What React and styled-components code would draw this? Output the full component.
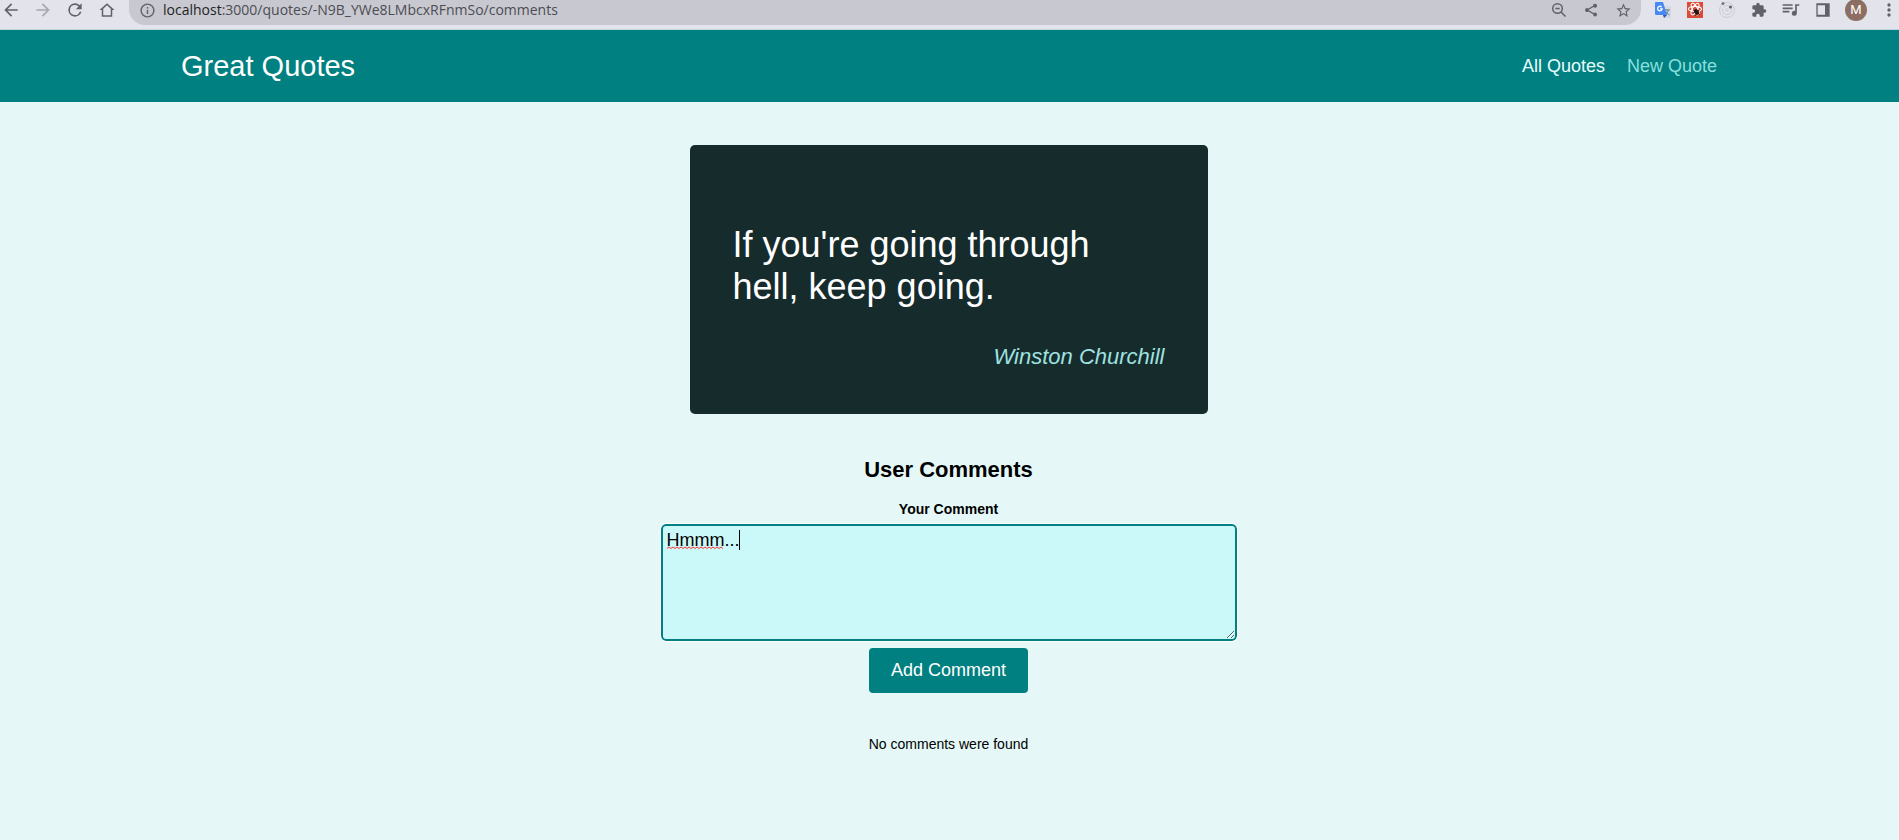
import React from 'react';
import styled, { createGlobalStyle } from 'styled-components';

const GlobalStyle = createGlobalStyle`
  * { box-sizing: border-box; }
  html { background: #e5f8f7; }
  body {
    margin: 0;
    background: #e5f8f7;
    color: #000;
    font-family: "Liberation Sans", Arial, sans-serif;
  }
`;

const Toolbar = styled.div`
  display: flex;
  align-items: flex-start;
  height: 30px;
  padding-left: 1px;
  background: #e3e3eb;
  border-bottom: 1px solid #c4d4dc;
  overflow: hidden;
`;

const NavButtons = styled.div`
  display: flex;
  gap: 12px;
  padding-right: 12px;
`;

const IconButton = styled.button`
  display: flex;
  align-items: center;
  justify-content: center;
  width: 20px;
  height: 20px;
  padding: 0;
  border: 0;
  background: none;
  color: #5f6368;
  opacity: ${(p) => (p.$dim ? 0.45 : 1)};

  svg {
    display: block;
    flex: none;
  }
`;

const AddressBar = styled.div`
  flex: 1;
  min-width: 0;
  display: flex;
  align-items: flex-start;
  height: 25px;
  padding: 0 8px;
  border-radius: 0 0 16px 16px;
  background: #c8c8d1;
`;

const UrlText = styled.div`
  flex: 1;
  min-width: 0;
  padding-left: 6px;
  font: 14px/20px "Open Sans", "Noto Sans", sans-serif;
  color: #4c4d52;
  white-space: nowrap;
`;

const Host = styled.span`
  color: #1f1f24;
`;

const PageActions = styled.div`
  display: flex;
  gap: 12px;
`;

const Extensions = styled.div`
  display: flex;
  gap: 12px;
  padding-left: 12px;
`;

const Avatar = styled.button`
  width: 22px;
  height: 22px;
  margin-top: -1px;
  padding: 0;
  border: 0;
  border-radius: 50%;
  background: #8d6e63;
  color: #fff;
  font: 13px/22px Roboto, sans-serif;
`;

const Header = styled.header`
  display: flex;
  align-items: center;
  justify-content: space-between;
  height: 72px;
  padding: 0 182px 0 181px;
  background: #008080;
`;

const Logo = styled.div`
  font-size: 29px;
  color: #fff;
`;

const NavList = styled.ul`
  display: flex;
  gap: 22px;
  margin: 0;
  padding: 0;
  list-style: none;
`;

const NavLink = styled.a`
  font-size: 18px;
  text-decoration: none;
  color: ${(p) => (p.$active ? '#e6fcfc' : '#88dfdf')};
`;

const Main = styled.main`
  display: flex;
  flex-direction: column;
  align-items: center;
  padding: 43px 18px 43px 16px;
`;

const Quote = styled.figure`
  display: flex;
  flex-direction: column;
  width: 100%;
  max-width: 518px;
  margin: 0;
  padding: 79px 43px 44px;
  border-radius: 5px;
  background: #162b2c;
`;

const QuoteText = styled.p`
  margin: 0 0 35px;
  font-size: 36px;
  line-height: 42px;
  color: #fff;
`;

const Author = styled.figcaption`
  align-self: flex-end;
  font-size: 22px;
  line-height: 27px;
  font-style: italic;
  color: #9fe2e0;
`;

const Comments = styled.section`
  display: flex;
  flex-direction: column;
  align-items: center;
  width: 100%;
  padding-top: 43px;
`;

const Title = styled.h2`
  margin: 0;
  font-size: 22px;
  line-height: 26px;
`;

const Form = styled.form`
  display: flex;
  flex-direction: column;
  align-items: center;
  width: 100%;
  max-width: 576px;
  padding-top: 18px;
`;

const Label = styled.label`
  margin-bottom: 7px;
  font-size: 14px;
  line-height: 16px;
  font-weight: bold;
`;

const Field = styled.div`
  position: relative;
  width: 100%;
`;

const TextArea = styled.textarea`
  display: block;
  width: 100%;
  height: 117px;
  padding: 4px;
  border: 2px solid #008080;
  border-radius: 5px;
  outline: 1px solid #fff;
  background: #cbf8f8;
  color: #000;
  font: 18px/20px "Liberation Sans", Arial, sans-serif;
`;

const TypingMarks = styled.svg`
  position: absolute;
  top: 6px;
  left: 6px;
  pointer-events: none;
`;

const SubmitButton = styled.button`
  margin-top: 7px;
  padding: 13px 22px;
  border: 0;
  border-radius: 4px;
  background: #008080;
  color: #fff;
  font: 18px/19px "Liberation Sans", Arial, sans-serif;
`;

const Empty = styled.p`
  margin: 43px 0 0;
  font-size: 14px;
  line-height: 16px;
`;

function Icon({ d, size = 18 }) {
  return (
    <svg width={size} height={size} viewBox="0 0 24 24" fill="currentColor" aria-hidden="true">
      <path d={d} />
    </svg>
  );
}

const paths = {
  back: 'M20 11H7.8l5.6-5.6L12 4l-8 8 8 8 1.4-1.4L7.800 13H20z',
  forward: 'M12 4l-1.400 1.400L16.200 11H4v2h12.200l-5.600 5.600L12 20l8-8z',
  reload: 'M17.650 6.350A7.960 7.960 0 0 0 12 4a8 8 0 1 0 7.730 10h-2.080A6 6 0 1 1 12 6c1.660 0 3.140.690 4.220 1.780L13 11h7V4z',
  home: 'M12 3 2 12h3v9h14v-9h3zm0 2.700 5 4.500V19H7v-8.800z',
  info: 'M11 7h2v2h-2zm0 4h2v6h-2zm1-9a10 10 0 1 0 0 20 10 10 0 0 0 0-20zm0 18a8 8 0 1 1 0-16 8 8 0 0 1 0 16z',
  share: 'M18 15.800c-.800 0-1.500.300-2.100.800l-7.100-4.200v-.900l7-4.100A3 3 0 1 0 15.100 5.700L8.100 9.800a3 3 0 1 0 0 4.400l7.100 4.200A2.900 2.900 0 1 0 18 15.800z',
  star: 'm22 9.240-7.190-.620L12 2 9.190 8.630 2 9.240l5.460 4.730L5.820 21 12 17.270 18.180 21l-1.630-7.030zM12 15.400l-3.760 2.270 1-4.280-3.320-2.880 4.380-.380L12 6.100l1.710 4.040 4.380.380-3.320 2.880 1 4.280z',
  puzzle: 'M20.500 11H19V7a2 2 0 0 0-2-2h-4V3.500a2.500 2.500 0 0 0-5 0V5H4a2 2 0 0 0-2 2v3.800h1.500a2.700 2.700 0 0 1 0 5.400H2V20a2 2 0 0 0 2 2h3.800v-1.500a2.700 2.700 0 0 1 5.400 0V22H17a2 2 0 0 0 2-2v-4h1.500a2.500 2.500 0 0 0 0-5z',
  queue: 'M2 5h12v2H2zm0 4h12v2H2zm0 4h8v2H2zM17 5h5v2h-3v9a3 3 0 1 1-2-2.830z',
  panel: 'M2 2h20v20H2zm2 3v14h11V5z',
  menu: 'M12 8a2 2 0 1 0 0-4 2 2 0 0 0 0 4zm0 2a2 2 0 1 0 0 4 2 2 0 0 0 0-4zm0 6a2 2 0 1 0 0 4 2 2 0 0 0 0-4z',
};

function ZoomOutIcon() {
  return (
    <svg width="16" height="16" viewBox="0 0 16 16" fill="none" stroke="currentColor" strokeWidth="1.500" aria-hidden="true">
      <circle cx="6.500" cy="6.500" r="4.800" />
      <path d="m10 10 4.500 4.500M4.300 6.500h4.400" />
    </svg>
  );
}

function TranslateIcon() {
  return (
    <svg width="16" height="16" viewBox="0 0 16 16" aria-hidden="true">
      <path d="M6 4h9a1 1 0 0 1 1 1v10a1 1 0 0 1-1 1H9z" fill="#d5d8dd" />
      <path d="M9 8h6M12 7v1M10 13c2-1 3-3 3-5M10.500 9c1 2 2 3 4 4" stroke="#667f92" fill="none" />
      <path d="M1 0h7l4 13H1a1 1 0 0 1-1-1V1a1 1 0 0 1 1-1z" fill="#4688f4" />
      <path d="m8 13h4l-3 3z" fill="#3451bd" />
      <path d="M6.600 5A2.300 2.300 0 1 0 7.200 6.800H5" stroke="#fff" strokeWidth="1.300" fill="none" />
    </svg>
  );
}

function ReactDebugIcon() {
  return (
    <svg width="16" height="16" viewBox="0 0 16 16" aria-hidden="true">
      <path fill="#dc4a38" d="M0 0h16v16H0z" />
      <g fill="none" stroke="#fff" strokeWidth="1.100">
        <ellipse cx="8" cy="7" rx="6.500" ry="2.500" />
        <ellipse cx="8" cy="7" rx="6.500" ry="2.500" transform="rotate(60 8 7)" />
        <ellipse cx="8" cy="7" rx="6.500" ry="2.500" transform="rotate(120 8 7)" />
      </g>
      <ellipse cx="9.500" cy="10" rx="2.200" ry="3" fill="#2b1514" transform="rotate(-35 9.500 10)" />
      <path d="m6 8 7 5M6 11l6-3M8 14l4-6" stroke="#2b1514" strokeWidth=".8" />
    </svg>
  );
}

function OrbitIcon() {
  return (
    <svg width="18" height="18" viewBox="0 0 18 18" aria-hidden="true">
      <g fill="none" stroke="#cbcbcf">
        <circle cx="9" cy="9" r="7.500" />
        <circle cx="9" cy="9" r="4.500" />
      </g>
      <circle cx="9" cy="9" r="2" fill="#d6d6da" />
      <circle cx="5" cy="2.500" r="1.500" fill="#77777b" />
      <circle cx="12.500" cy="6" r="1.600" fill="#66666a" />
    </svg>
  );
}

export default function App() {
  return (
    <>
      <GlobalStyle />
      <Toolbar>
        <NavButtons>
          <IconButton aria-label="Back"><Icon d={paths.back} size={20} /></IconButton>
          <IconButton aria-label="Forward" $dim><Icon d={paths.forward} size={20} /></IconButton>
          <IconButton aria-label="Reload"><Icon d={paths.reload} size={20} /></IconButton>
          <IconButton aria-label="Home"><Icon d={paths.home} /></IconButton>
        </NavButtons>
        <AddressBar>
          <IconButton aria-label="Site information"><Icon d={paths.info} size={17} /></IconButton>
          <UrlText><Host>localhost</Host>:3000/quotes/-N9B_YWe8LMbcxRFnmSo/comments</UrlText>
          <PageActions>
            <IconButton aria-label="Zoom out"><ZoomOutIcon /></IconButton>
            <IconButton aria-label="Share"><Icon d={paths.share} size={16} /></IconButton>
            <IconButton aria-label="Bookmark"><Icon d={paths.star} size={17} /></IconButton>
          </PageActions>
        </AddressBar>
        <Extensions>
          <IconButton aria-label="Translate"><TranslateIcon /></IconButton>
          <IconButton aria-label="React tools"><ReactDebugIcon /></IconButton>
          <IconButton aria-label="Orbit"><OrbitIcon /></IconButton>
          <IconButton aria-label="Extensions"><Icon d={paths.puzzle} size={16} /></IconButton>
          <IconButton aria-label="Media"><Icon d={paths.queue} size={20} /></IconButton>
          <IconButton aria-label="Side panel"><Icon d={paths.panel} size={16} /></IconButton>
          <Avatar aria-label="Profile">M</Avatar>
          <IconButton aria-label="Menu"><Icon d={paths.menu} size={20} /></IconButton>
        </Extensions>
      </Toolbar>
      <Header>
        <Logo>Great Quotes</Logo>
        <nav>
          <NavList>
            <li><NavLink href="#quotes" $active>All Quotes</NavLink></li>
            <li><NavLink href="#new-quote">New Quote</NavLink></li>
          </NavList>
        </nav>
      </Header>
      <Main>
        <Quote>
          <QuoteText>If you're going through hell, keep going.</QuoteText>
          <Author>Winston Churchill</Author>
        </Quote>
        <Comments>
          <Title>User Comments</Title>
          <Form onSubmit={(e) => e.preventDefault()}>
            <Label htmlFor="comment">Your Comment</Label>
            <Field>
              <TextArea id="comment" defaultValue="Hmmm..." />
              <TypingMarks width="80" height="22" aria-hidden="true">
                <path d="M0 18.500l2-1.500 2 1.500 2-1.500 2 1.500 2-1.500 2 1.500 2-1.500 2 1.500 2-1.500 2 1.500 2-1.500 2 1.500 2-1.500 2 1.500 2-1.500 2 1.500 2-1.500 2 1.500 2-1.500 2 1.500 2-1.500 2 1.500 2-1.500 2 1.500 2-1.500 2 1.500 2-1.500 2 1.500" fill="none" stroke="#f33" />
                <path d="M72 0h1v20h-1z" />
              </TypingMarks>
            </Field>
            <SubmitButton>Add Comment</SubmitButton>
          </Form>
          <Empty>No comments were found</Empty>
        </Comments>
      </Main>
    </>
  );
}
